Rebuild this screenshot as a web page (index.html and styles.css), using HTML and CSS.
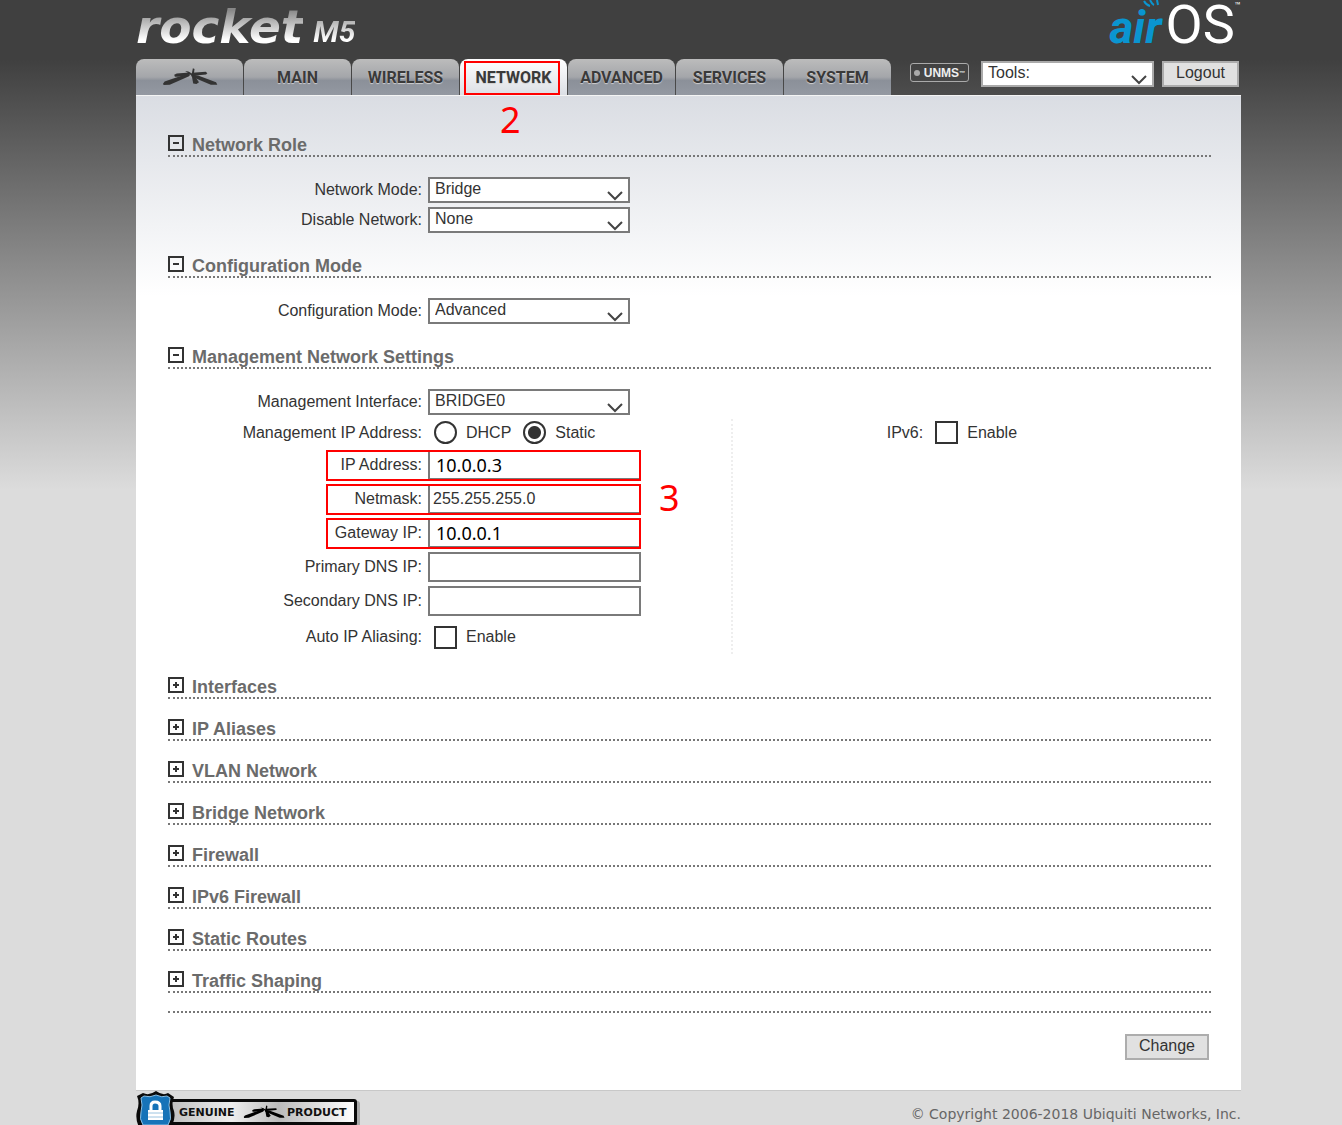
FILE: index.html
```html
<!DOCTYPE html>
<html lang="en">
<head>
    <meta charset="UTF-8">
    <meta name="viewport" content="width=device-width, initial-scale=1.0">
    <title>Rocket M5 - Network</title>
    <link rel="stylesheet" href="styles.css">
</head>
<body>

<!-- shared icons -->
<svg class="defs" width="0" height="0" aria-hidden="true">
    <symbol id="antenna" viewBox="12 18 174 56">
        <path d="M15 67 L20 60 L84 38 L100 38 L96 44 L36 70 L17 71 Z"/>
        <path d="M50 39 L58 35 L98 32 L98 39 L62 45 L52 45 Z"/>
        <path d="M108 19 L113 21 L110 46 L103 44 Z"/>
        <path d="M84 27 L94 29 L124 46 L114 48 Z"/>
        <path d="M106 33 L148 30 L153 34 L149 38 L108 42 Z"/>
        <path d="M104 40 L114 44 L127 62 L119 68 L109 66 Z"/>
        <path d="M108 39 L124 41 L180 62 L184 70 L164 70 L112 48 Z"/>
    </symbol>
    <symbol id="minus" viewBox="0 0 16 16">
        <path d="M1 1h14v14H1z" fill="none" stroke="#333" stroke-width="2"/>
        <path d="M5 8h6" stroke="#333" stroke-width="2"/>
    </symbol>
    <symbol id="plus" viewBox="0 0 16 16">
        <path d="M1 1h14v14H1z" fill="none" stroke="#333" stroke-width="2"/>
        <path d="M5 8h6M8 5v6" stroke="#333" stroke-width="2"/>
    </symbol>
</svg>

<div class="page">
    <header>
        <div class="logos">
            <div class="product"><span class="rocket">rocket</span><span class="model">M5</span></div>
            <div class="airos">
                <span class="air">air</span><span class="os">OS</span><span class="tm">™</span>
                <svg class="waves" width="20" height="8" viewBox="0 0 20 8" aria-hidden="true">
                    <path d="M1 1 Q3 5 7 6 M7 0 Q9 4 11 5 M14 0 L15 5" fill="none" stroke="#0a95d0" stroke-width="2"/>
                </svg>
            </div>
        </div>
        <div class="bar">
            <nav class="tabs">
                <a href="#" class="tab" aria-label="Ubiquiti"><svg class="mark" width="56" height="18"><use href="#antenna"/></svg></a>
                <a href="#" class="tab">MAIN</a>
                <a href="#" class="tab">WIRELESS</a>
                <a href="#" class="tab active">NETWORK<span class="step step-tab">2</span></a>
                <a href="#" class="tab">ADVANCED</a>
                <a href="#" class="tab">SERVICES</a>
                <a href="#" class="tab">SYSTEM</a>
            </nav>
            <div class="tools">
                <a href="#" class="unms"><span class="dot"></span>UNMS<sup>™</sup></a>
                <select class="tools-select" aria-label="Tools">
                    <option>Tools:</option>
                </select>
                <button type="button">Logout</button>
            </div>
        </div>
    </header>

    <main class="panel">
        <h2><button type="button" class="toggle" aria-label="Collapse"><svg width="16" height="16"><use href="#minus"/></svg></button>Network Role</h2>
        <div class="section">
            <div class="row">
                <label for="netmode">Network Mode:</label>
                <select id="netmode"><option>Bridge</option></select>
            </div>
            <div class="row">
                <label for="disable">Disable Network:</label>
                <select id="disable"><option>None</option></select>
            </div>
        </div>

        <h2><button type="button" class="toggle" aria-label="Collapse"><svg width="16" height="16"><use href="#minus"/></svg></button>Configuration Mode</h2>
        <div class="section">
            <div class="row">
                <label for="cfgmode">Configuration Mode:</label>
                <select id="cfgmode"><option>Advanced</option></select>
            </div>
        </div>

        <h2><button type="button" class="toggle" aria-label="Collapse"><svg width="16" height="16"><use href="#minus"/></svg></button>Management Network Settings</h2>
        <div class="section">
            <div class="row">
                <label for="mgmtif">Management Interface:</label>
                <select id="mgmtif"><option>BRIDGE0</option></select>
            </div>
            <div class="columns">
                <div class="column">
                    <div class="row row-radio">
                        <span class="label">Management IP Address:</span>
                        <label class="choice"><input type="radio" name="ipmode">DHCP</label>
                        <label class="choice"><input type="radio" name="ipmode" checked>Static</label>
                    </div>
                    <div class="row marked">
                        <label for="ip">IP Address:</label>
                        <input type="text" id="ip" class="edited" value="10.0.0.3">
                    </div>
                    <div class="row marked">
                        <label for="netmask">Netmask:</label>
                        <input type="text" id="netmask" value="255.255.255.0">
                        <span class="step step-row">3</span>
                    </div>
                    <div class="row marked">
                        <label for="gateway">Gateway IP:</label>
                        <input type="text" id="gateway" class="edited" value="10.0.0.1">
                    </div>
                    <div class="row">
                        <label for="dns1">Primary DNS IP:</label>
                        <input type="text" id="dns1">
                    </div>
                    <div class="row">
                        <label for="dns2">Secondary DNS IP:</label>
                        <input type="text" id="dns2">
                    </div>
                    <div class="row row-check">
                        <span class="label">Auto IP Aliasing:</span>
                        <label class="choice"><input type="checkbox">Enable</label>
                    </div>
                </div>
                <div class="column column-ipv6">
                    <div class="row row-radio">
                        <span class="label">IPv6:</span>
                        <label class="choice"><input type="checkbox">Enable</label>
                    </div>
                </div>
            </div>
        </div>

        <div class="collapsed">
            <h2><button type="button" class="toggle" aria-label="Expand"><svg width="16" height="16"><use href="#plus"/></svg></button>Interfaces</h2>
            <h2><button type="button" class="toggle" aria-label="Expand"><svg width="16" height="16"><use href="#plus"/></svg></button>IP Aliases</h2>
            <h2><button type="button" class="toggle" aria-label="Expand"><svg width="16" height="16"><use href="#plus"/></svg></button>VLAN Network</h2>
            <h2><button type="button" class="toggle" aria-label="Expand"><svg width="16" height="16"><use href="#plus"/></svg></button>Bridge Network</h2>
            <h2><button type="button" class="toggle" aria-label="Expand"><svg width="16" height="16"><use href="#plus"/></svg></button>Firewall</h2>
            <h2><button type="button" class="toggle" aria-label="Expand"><svg width="16" height="16"><use href="#plus"/></svg></button>IPv6 Firewall</h2>
            <h2><button type="button" class="toggle" aria-label="Expand"><svg width="16" height="16"><use href="#plus"/></svg></button>Static Routes</h2>
            <h2><button type="button" class="toggle" aria-label="Expand"><svg width="16" height="16"><use href="#plus"/></svg></button>Traffic Shaping</h2>
            <div class="rule"></div>
        </div>

        <div class="actions">
            <button type="button">Change</button>
        </div>
    </main>

    <footer>
        <svg class="badge" width="226" height="34" viewBox="0 0 226 34" role="img" aria-label="Genuine Product">
            <defs>
                <linearGradient id="metal" x1="0" x2="1" y1="0" y2="0">
                    <stop offset="0" stop-color="#bbb"/>
                    <stop offset="0.35" stop-color="#eee"/>
                    <stop offset="0.6" stop-color="#bbb"/>
                    <stop offset="1" stop-color="#fff"/>
                </linearGradient>
            </defs>
            <rect x="32" y="10" width="192" height="30" rx="3" fill="#aaa"/>
            <rect x="30" y="8" width="191" height="27" rx="3" fill="#0a0a0a"/>
            <rect x="30" y="11" width="188" height="20" fill="url(#metal)"/>
            <path d="M1 5 L7 2 Q13 5 20 0 Q27 5 32 2 L38 6 Q35 13 38 20 Q40 28 35 36 H3 Q-1 28 1 20 Q4 12 1 5 Z" fill="#0a0a0a"/>
            <path d="M5 7 L8 5 Q14 7 20 4 Q26 7 31 5 L34 7 Q32 14 34 21 Q36 28 32 34 H7 Q3 28 5 21 Q7 14 5 7 Z" fill="#1673b8" stroke="#8cc0e4" stroke-width="1"/>
            <path d="M15 20 V15 Q15 11 19 11 Q24 11 24 15 V20" fill="none" stroke="#fff" stroke-width="3"/>
            <path d="M12 19 H27 V29 H12 Z" fill="#fff"/>
            <path d="M12 22 H27 M12 26 H27" stroke="#9cc4e0" stroke-width="1"/>
            <text x="43" y="25" class="badge-text">GENUINE</text>
            <use href="#antenna" x="107" y="14" width="42" height="14"/>
            <text x="151" y="25" class="badge-text">PRODUCT</text>
        </svg>
        <p>© Copyright 2006-2018 Ubiquiti Networks, Inc.</p>
    </footer>
</div>

</body>
</html>
```
FILE: styles.css
```css
*, *::after {
    box-sizing: border-box;
}
body {
    margin: 0;
    font-family: "Liberation Sans", Arial, sans-serif;
    font-size: 16px;
    color: #333;
    background: #dcdcdc linear-gradient(#404040 60px, #dcdcdc 490px) no-repeat;
}
.defs {
    position: absolute;
}
.page {
    margin: 0 101px 0 136px;
}

/* Header */
.logos {
    display: flex;
    justify-content: space-between;
    height: 59px;
}
.product {
    display: flex;
    gap: 10px;
    font-family: "DejaVu Sans", sans-serif;
    font-weight: bold;
    font-style: italic;
    line-height: 54px;
}
.rocket, .model {
    color: transparent;
    background: linear-gradient(#888 10px, #fff 40px);
    -webkit-background-clip: text;
    background-clip: text;
}
.rocket {
    font-size: 47px;
}
.model {
    font-family: Roboto, sans-serif;
    font-size: 30px;
    line-height: 64px;
}
.airos {
    position: relative;
    display: flex;
    font-family: Roboto, sans-serif;
}
.air {
    color: #0a95d0;
    font-size: 46px;
    font-style: italic;
    font-weight: bold;
    line-height: 55px;
    margin-right: 4px;
}
.os {
    color: #fff;
    font-size: 54px;
    line-height: 50px;
}
.tm {
    color: #fff;
    font-size: 10px;
    line-height: 12px;
}
.waves {
    position: absolute;
    left: 34px;
    top: 0;
}
.bar {
    display: flex;
    justify-content: space-between;
    height: 36px;
}
.tabs {
    display: flex;
    gap: 1px;
}
.tab {
    position: relative;
    display: flex;
    align-items: center;
    justify-content: center;
    width: 107px;
    border-radius: 8px 8px 0 0;
    background: linear-gradient(#bcbcbc, #a4a6aa 50%, #8b9099 60%, #9499a2);
    color: #3a3a3a;
    font-family: Roboto, sans-serif;
    font-size: 16px;
    font-weight: bold;
    text-decoration: none;
    text-shadow: 0 1px 1px #d0d0d0;
}
.tab.active {
    background: linear-gradient(#fff, #dcdfe5);
}
.mark {
    fill: #333;
}
.tab.active::after {
    content: "";
    position: absolute;
    left: 4px;
    right: 7px;
    top: 2px;
    bottom: 0;
    border: 2px solid #f00;
}
.tools {
    display: flex;
    align-items: flex-start;
    gap: 8px;
    padding: 2px 2px 0 0;
}
.unms {
    display: flex;
    align-items: center;
    gap: 4px;
    height: 19px;
    margin: 2px 4px 0 0;
    padding: 0 3px;
    border: 1px solid #aaa;
    border-radius: 3px;
    color: #eee;
    font-size: 12px;
    font-weight: bold;
    text-decoration: none;
}
.unms sup {
    font-size: 6px;
    margin-left: -4px;
}
.dot {
    width: 6px;
    height: 6px;
    border-radius: 50%;
    background: #aaa;
}

/* Form controls */
select, input[type="text"] {
    border: 2px solid #7a7a7a;
    border-radius: 0;
    background-color: #fff;
    color: #333;
    font-family: inherit;
    font-size: 16px;
}
select {
    appearance: none;
    width: 202px;
    height: 26px;
    padding: 0 24px 3px 5px;
    background-image: url("data:image/svg+xml,%3Csvg xmlns='http://www.w3.org/2000/svg' width='16' height='10'%3E%3Cpath d='M1 1l7 7 7-7' fill='none' stroke='%23444' stroke-width='2'/%3E%3C/svg%3E");
    background-repeat: no-repeat;
    background-position: right 5px bottom 0;
}
.tools-select {
    width: 173px;
    border-color: #aaa;
}
input[type="text"] {
    width: 213px;
    height: 30px;
    padding: 0 3px;
}
input[type="text"].edited {
    padding: 0 6px;
    color: #000;
    font-family: "Noto Sans", sans-serif;
    font-size: 18px;
}
input[type="radio"], input[type="checkbox"] {
    appearance: none;
    width: 23px;
    height: 23px;
    margin: 0;
    border: 2px solid #333;
    background: #fff;
}
input[type="radio"] {
    border-radius: 50%;
}
input[type="radio"]:checked {
    background: radial-gradient(circle, #333 6px, #fff 7px);
}
button {
    height: 26px;
    padding: 0 12px 2px;
    border: 2px solid #adadad;
    background: #e1e1e1;
    color: #333;
    font-family: inherit;
    font-size: 16px;
    cursor: pointer;
}

/* Content */
.panel {
    padding: 37px 30px 30px 32px;
    background: #fff linear-gradient(#dadde3, #fff 200px) no-repeat;
    border-top: 1px solid #f4f4f4;
    border-bottom: 1px solid #c8c8c8;
}
h2 {
    display: flex;
    align-items: center;
    height: 24px;
    margin: 0;
    padding-top: 2px;
    border-bottom: 2px dotted #777;
    color: #6b6b6b;
    font-size: 18px;
}
.toggle {
    display: flex;
    width: 24px;
    height: 20px;
    padding: 0;
    border: 0;
    background: none;
}
.section {
    display: flex;
    flex-direction: column;
    gap: 4px;
    padding: 20px 0 21px;
}
.row {
    position: relative;
    display: flex;
    align-items: center;
    gap: 6px;
}
.row > label, .label {
    width: 254px;
    text-align: right;
}
.columns {
    display: grid;
    grid-template-columns: 54% 46%;
}
.column {
    display: flex;
    flex-direction: column;
    gap: 4px;
}
.column-ipv6 {
    border-left: 2px dotted #eee;
}
.column-ipv6 .label {
    width: 190px;
}
.row-radio {
    height: 27px;
}
.row-check {
    height: 34px;
}
.row > .choice {
    display: flex;
    align-items: center;
    gap: 9px;
    width: auto;
    padding-left: 6px;
}
.collapsed {
    display: flex;
    flex-direction: column;
    gap: 18px;
}
.rule {
    border-bottom: 2px dotted #777;
}
.actions {
    display: flex;
    justify-content: flex-end;
    padding: 21px 2px 0 0;
}

/* Red marks over the fields to fill in */
.marked::after {
    content: "";
    position: absolute;
    left: 158px;
    top: 0;
    bottom: -1px;
    width: 315px;
    border: 2px solid #f00;
    pointer-events: none;
}
.step {
    position: absolute;
    color: #f00;
    font-family: "Noto Sans", sans-serif;
    font-size: 36px;
    font-weight: normal;
    line-height: 36px;
    text-shadow: none;
}
.step-tab {
    left: 40px;
    top: 43px;
}
.step-row {
    left: 491px;
    top: -4px;
}

footer {
    display: flex;
    justify-content: space-between;
    height: 34px;
}
footer p {
    margin: 0;
    padding-top: 15px;
    font-family: "DejaVu Sans", Verdana, sans-serif;
    font-size: 14px;
    color: #666;
}
.badge-text {
    font-family: "DejaVu Sans", sans-serif;
    font-size: 11px;
    font-weight: bold;
    fill: #111;
}
```
